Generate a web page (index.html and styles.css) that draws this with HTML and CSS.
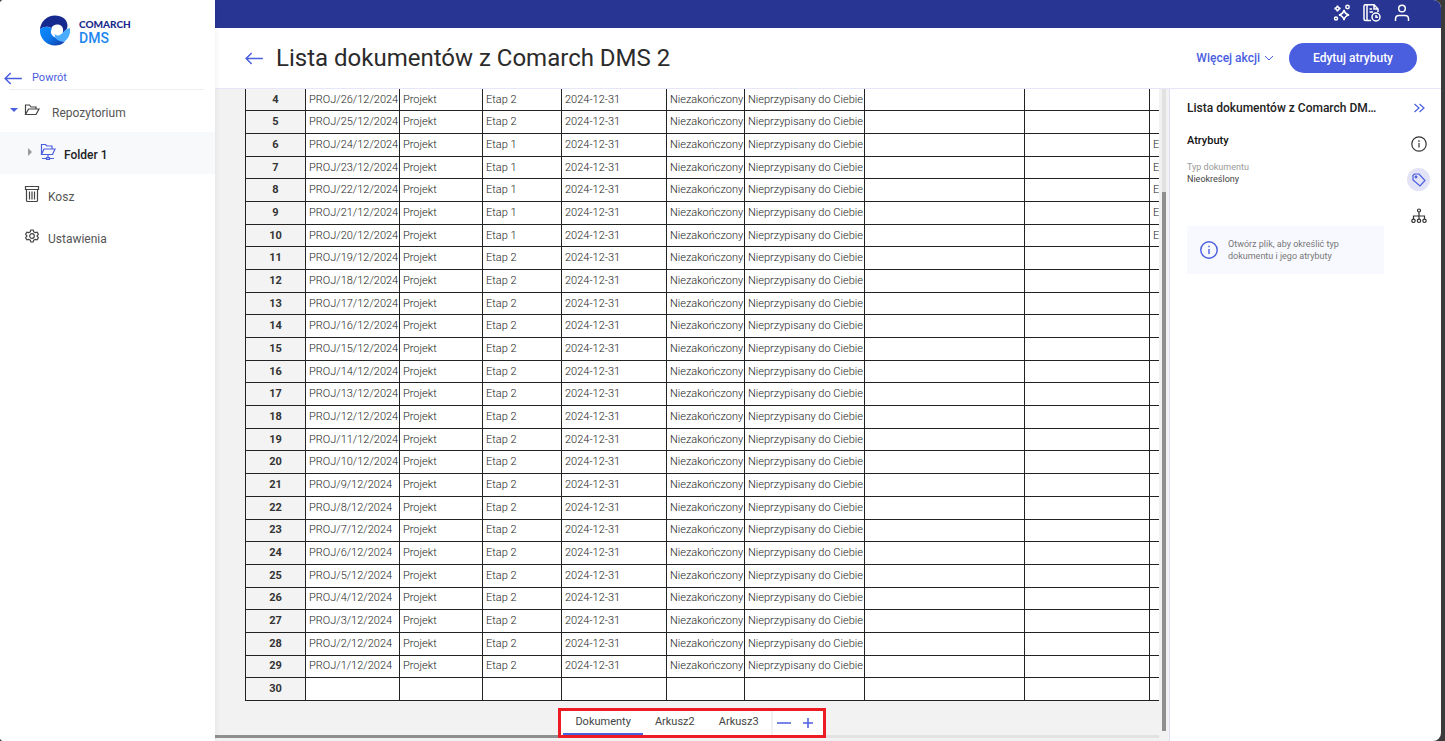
FILE: index.html
```html
<!DOCTYPE html>
<html lang="pl">
<head>
<meta charset="utf-8">
<title>Comarch DMS</title>
<link rel="stylesheet" href="styles.css">
</head>
<body>
<div class="app">
  <nav class="sidebar" aria-label="Nawigacja">
    <div class="brand">
      <svg class="brand-mark" viewBox="0 0 90 90" aria-hidden="true">
        <defs>
          <linearGradient id="wave" x1="0" y1="0" x2="1" y2="1">
            <stop offset="0" stop-color="#0a8cff"/><stop offset=".5" stop-color="#0a78ea"/><stop offset="1" stop-color="#1433a0"/>
          </linearGradient>
        </defs>
        <path fill="#15298f" d="M0 42A45 45 0 0 1 45 0C66 0 80 12 82 26C84 38 78 46 68 52C72 42 68 31 58 28C48 25 38 29 34 38C22 30 8 34 0 42Z"/>
        <path fill="url(#wave)" d="M0 42C10 31 26 31 36 40C28 50 34 60 46 66C56 74 66 79 75 78C66 87 56 90 45 90A45 45 0 0 1 0 42Z"/>
        <path fill="#4aacff" d="M90 38A45 45 0 0 1 74 78C58 79 44 72 44 56C56 64 62 58 68 52C74 44 82 38 90 38Z"/>
      </svg>
      <div class="brand-text"><span class="brand-name">COMARCH</span><span class="brand-product">DMS</span></div>
    </div>
    <a class="back" href="#">
      <svg class="back-arrow" viewBox="0 0 20 14" aria-hidden="true"><path d="M7 1 1 7l6 6M1 7h18"/></svg>
      Powrót
    </a>
    <ul class="tree">
      <li><a class="node" href="#">
        <svg class="caret" viewBox="0 0 8 8" aria-hidden="true"><path fill="#4a5ee0" d="M0 2h8L4 6z"/></svg>
        <svg class="icon" viewBox="0 0 16 16" aria-hidden="true"><path d="M1.500 12.500V3h4l1.500 2h5v2M1.500 12.500l3-5.500h10.500l-3 5.500z"/></svg>
        <span class="label label-wide">Repozytorium</span></a></li>
      <li><a class="node node-child" href="#" aria-current="page">
        <svg class="caret" viewBox="0 0 8 8" aria-hidden="true"><path fill="#999" d="M2 0v8l4-4z"/></svg>
        <svg class="icon icon-accent" viewBox="0 0 16 18" aria-hidden="true"><path d="M1.500 11.500V1.500h4L7 3h5v3M1.500 11.500 4 6h11l-2.500 5.500zM8 11.500v4M2 15.500h4.500M9.500 15.500H14M6.500 14.500h3v2h-3z"/></svg>
        <span class="label">Folder 1</span></a></li>
      <li><a class="node" href="#">
        <svg class="icon icon-first" viewBox="0 0 16 18" aria-hidden="true"><path d="M1.500 1.500h13v3h-13zM2.500 4.500v11q0 1 1 1h9q1 0 1-1v-11M5.500 6.500v8M8 6.500v8M10.500 6.500v8"/></svg>
        <span class="label">Kosz</span></a></li>
      <li><a class="node" href="#">
        <svg class="icon icon-first" viewBox="0 0 16 16" aria-hidden="true"><circle cx="8" cy="8" r="2.300"/><path d="M6.800 2h2.400l.5 1.800 1.600.9 1.800-.5 1.300 2.100L13 8l1.400 1.700-1.300 2.100-1.800-.5-1.600.9-.5 1.800H6.800l-.5-1.800-1.600-.9-1.800.5-1.300-2.100L3 8 1.600 6.300l1.300-2.100 1.800.5 1.600-.9z"/></svg>
        <span class="label">Ustawienia</span></a></li>
    </ul>
  </nav>
  <div class="page">
    <div class="topbar">
      <button class="icon-btn" type="button" aria-label="Asystent">
        <svg class="top-icon" viewBox="0 0 18 18" aria-hidden="true"><path d="M11 6q.8 4 5 5-4.200 1-5 5-.8-4-5-5 4.200-1 5-5zM4.500 1.500q.4 2.500 3 3-2.600.5-3 3-.4-2.500-3-3 2.600-.5 3-3z"/><circle cx="14.500" cy="3" r="1.700"/><circle cx="3" cy="14.500" r="1.500"/></svg>
      </button>
      <button class="icon-btn" type="button" aria-label="Dokumenty">
        <svg class="top-icon" viewBox="0 0 18 18" aria-hidden="true"><path d="M8 16.500H2.500q-1.500 0-1.500-1.500V2Q1 .7 2.500.7H11L15 5v3M4 .7v15.800M11 .7V5h4M6.500 5H9M6.500 8H10"/><circle cx="13" cy="13" r="4"/><path d="M13 11v2.300h2"/></svg>
      </button>
      <button class="icon-btn" type="button" aria-label="Konto">
        <svg class="top-icon" viewBox="0 0 18 18" aria-hidden="true"><circle cx="9" cy="4.500" r="3.300"/><path d="M2.500 17v-2q0-3.500 3.500-3.500h6q3.500 0 3.500 3.500v2"/></svg>
      </button>
    </div>
    <header class="header">
      <a class="header-back" href="#" aria-label="Wstecz"><svg class="back-arrow" viewBox="0 0 20 14" aria-hidden="true"><path d="M7 1 1 7l6 6M1 7h18"/></svg></a>
      <h1 class="title">Lista dokumentów z Comarch DMS 2</h1>
      <button class="more" type="button">Więcej akcji <svg class="chevron" viewBox="0 0 10 6" aria-hidden="true"><path d="m1 1 4 4 4-4"/></svg></button>
      <button class="primary" type="button">Edytuj atrybuty</button>
    </header>
    <div class="body">
      <main class="viewer">
        <div class="sheet">
          <table class="grid">
            <colgroup><col class="c-num"><col class="c-id"><col class="c-type"><col class="c-stage"><col class="c-date"><col class="c-state"><col class="c-owner"><col class="c-blank"><col class="c-blank2"><col class="c-last"></colgroup>
            <tbody id="rows"></tbody>
          </table>
        </div>
        <div class="vscroll"><div class="vthumb"></div></div>
        <div class="hscroll"><div class="hthumb"></div></div>
        <div class="footer">
          <div class="tabs">
            <button class="tab tab-active" type="button">Dokumenty</button>
            <button class="tab" type="button">Arkusz2</button>
            <button class="tab" type="button">Arkusz3</button>
            <div class="zoom">
              <button class="zoom-btn" type="button" aria-label="Pomniejsz"><svg class="zoom-icon" viewBox="0 0 14 14" aria-hidden="true"><path d="M0 7h14"/></svg></button>
              <button class="zoom-btn" type="button" aria-label="Powiększ"><svg class="zoom-icon" viewBox="0 0 14 14" aria-hidden="true"><path d="M2 7h10M7 2v10"/></svg></button>
            </div>
          </div>
        </div>
      </main>
      <aside class="details">
        <div class="info">
          <h2 class="info-title">Lista dokumentów z Comarch DMS 2</h2>
          <h3 class="info-section">Atrybuty</h3>
          <dl class="attr"><dt>Typ dokumentu</dt><dd>Nieokreślony</dd></dl>
          <div class="notice">
            <svg class="notice-icon" viewBox="0 0 18 18" aria-hidden="true"><circle cx="9" cy="9" r="8.200"/><path d="M9 8v5M9 4.700v1.500"/></svg>
            <p class="notice-text">Otwórz plik, aby określić typ dokumentu i jego atrybuty</p>
          </div>
        </div>
        <div class="rail">
          <button class="rail-btn rail-collapse" type="button" aria-label="Zwiń"><svg class="rail-icon" viewBox="0 0 16 16" aria-hidden="true"><path d="m3.500 4 4.500 4-4.500 4M8.500 4 13 8l-4.500 4"/></svg></button>
          <button class="rail-btn" type="button" aria-label="Informacje"><svg class="rail-icon" viewBox="0 0 16 16" aria-hidden="true"><circle cx="8" cy="8" r="7.200"/><path d="M8 7v4.500M8 4.300V6"/></svg></button>
          <button class="rail-btn rail-active" type="button" aria-label="Atrybuty"><svg class="rail-icon" viewBox="0 0 16 16" aria-hidden="true"><path d="M2 3.500 3.500 2H8l6 6.500L9 14 2 8z"/><circle cx="5" cy="5" r=".8"/></svg></button>
          <button class="rail-btn" type="button" aria-label="Struktura"><svg class="rail-icon" viewBox="0 0 16 16" aria-hidden="true"><circle cx="8" cy="2.500" r="1.500"/><path d="M8 4v7M2.500 11V8h11v3"/><circle cx="2.500" cy="12.800" r="1.700"/><circle cx="8" cy="12.800" r="1.700"/><circle cx="13.500" cy="12.800" r="1.700"/></svg></button>
        </div>
      </aside>
    </div>
  </div>
</div>
<script src="sheet.js"></script>
</body>
</html>
```
FILE: styles.css
```css
* { box-sizing: border-box; }
html, body { height: 100%; }
body {
  margin: 0;
  background: #3b3b3b;
  color: #333;
  font: 12px/16px Roboto, "Liberation Sans", sans-serif;
}
button { padding: 0; border: 0; background: none; font: inherit; color: inherit; }
a { color: inherit; text-decoration: none; }
svg { flex: none; fill: none; stroke: currentColor; }

.app {
  display: flex;
  height: 100vh;
  margin-right: 4px;
  border-radius: 4px 8px 8px 4px;
  background: #fff;
  overflow: hidden;
}

.sidebar {
  position: relative;
  z-index: 1;
  flex: none;
  width: 215px;
  background: #fff;
  box-shadow: 0 0 6px rgba(0, 0, 0, .08);
}
.brand { display: flex; align-items: center; gap: 9px; padding: 15px 0 0 40px; }
.brand-mark { width: 30px; height: 31px; stroke: none; }
.brand-text { display: flex; flex-direction: column; }
.brand-name { color: #1a2a8c; font: 900 10px/14px Lato, sans-serif; }
.brand-product { color: #1e86f0; font-weight: 500; font-size: 14px; line-height: 14px; }
.back {
  display: flex;
  align-items: center;
  gap: 9px;
  margin: 21px 11px 0 0;
  padding-left: 4px;
  height: 22px;
  color: #4a5ee0;
  font-size: 11px;
}
.back-arrow { width: 19px; height: 13px; stroke: #4a5ee0; stroke-width: 1.600; }
.tree {
  margin: 0 11px 0 9px;
  padding: 0;
  border-top: 1px solid #eee;
  list-style: none;
}
.node {
  display: flex;
  align-items: center;
  height: 42px;
  margin: 0 -11px 0 -9px;
  padding-left: 10px;
  color: #555;
}
.node-child { padding-left: 26px; background: #f8f9fb; color: #222; font-weight: 500; }
.caret { width: 8px; height: 8px; margin-right: 6px; margin-bottom: 2px; stroke: none; }
.icon { width: 16px; height: 18px; margin-right: 8px; margin-bottom: 2px; color: #444; stroke-width: 1.200; }
.icon-accent { color: #4a5ee0; }
.icon-first { margin-left: 14px; }
.label { padding-top: 4px; }
.label-wide { margin-left: 4px; }

.page { display: flex; flex: 1; flex-direction: column; min-width: 0; }
.topbar {
  display: flex;
  flex: none;
  align-items: center;
  justify-content: flex-end;
  gap: 12px;
  height: 28px;
  padding: 0 30px 2px;
  background: #283593;
}
.icon-btn { display: flex; color: #fff; }
.top-icon { width: 18px; height: 18px; stroke-width: 1.500; }
.header {
  display: flex;
  flex: none;
  align-items: center;
  height: 61px;
  padding: 0 24px 0 30px;
  border-bottom: 1px solid #e6e6f8;
}
.header-back { display: flex; margin-right: 12px; }
.title { flex: 1; margin: 0; color: #2b2b2b; font-size: 24px; font-weight: 400; line-height: 32px; }
.more { display: flex; align-items: center; gap: 4px; margin-right: 15px; color: #4a5ee0; font-weight: 500; }
.chevron { width: 10px; height: 6px; }
.primary { height: 30px; padding: 0 24px; border-radius: 15px; background: #4a5ee0; color: #fff; font-weight: 500; }

.body { display: flex; flex: 1; min-height: 0; }
.viewer {
  display: grid;
  flex: 1;
  grid-template-columns: minmax(0, 1fr) 10px;
  grid-template-rows: minmax(0, 1fr) 40px;
  min-width: 0;
  background: #f2f2f2;
}
.sheet { padding-left: 30px; overflow: hidden; }
.grid {
  width: 1100px;
  height: 100%;
  border-collapse: collapse;
  table-layout: fixed;
  background: #fff;
  color: #222;
  font-size: 11px;
  font-weight: 300;
  line-height: 14px;
}
.grid th, .grid td { padding: 0 3px; border: 1px solid #222; text-align: left; white-space: nowrap; }
.grid tr:first-child > * { border-top: 0; }
.grid th { background: #f3f3f3; color: #333; font-weight: 700; text-align: center; }
.c-num { width: 60px; }
.c-id { width: 94px; }
.c-type { width: 83px; }
.c-stage { width: 79px; }
.c-date { width: 105px; }
.c-state { width: 78px; }
.c-owner { width: 120px; }
.c-blank { width: 160px; }
.c-blank2 { width: 125px; }

.vscroll { grid-area: 1 / 2 / 3 / 3; width: 4px; margin: 0 0 10px 3px; padding-top: 103px; background: #e2e2e2; }
.vthumb { height: 100%; background: #8f8f8f; }
.hscroll { grid-area: 2 / 1; align-self: end; height: 3px; margin-bottom: 3px; background: #e2e2e2; }
.hthumb { width: 383px; height: 3px; background: #8f8f8f; }
.footer { grid-area: 2 / 1 / 3 / 3; display: flex; justify-content: center; padding: 7px 0 3px; }
.tabs { display: flex; padding-left: 2px; border: 3px solid #ed1c24; background: #fff; color: #444; font-size: 11px; }
.tab { padding: 0 12px; border-bottom: 2px solid transparent; }
.tab-active { border-color: #4a5ee0; }
.zoom { display: flex; gap: 10px; padding: 0 8px 0 4px; border-left: 2px solid #f2f2f2; color: #4a5ee0; }
.zoom-btn { display: flex; align-items: center; }
.zoom-icon { width: 14px; height: 14px; stroke-width: 1.500; }

.details {
  display: flex;
  flex: none;
  justify-content: space-between;
  width: 272px;
  padding: 7px 11px 0 17px;
  border-left: 1px solid #e0e0f5;
}
.info { width: 197px; padding-top: 3px; }
.info-title {
  margin: 0;
  padding-right: 4px;
  overflow: hidden;
  color: #222;
  font-size: 12px;
  font-weight: 500;
  line-height: 18px;
  text-overflow: ellipsis;
  white-space: nowrap;
}
.info-section { margin: 16px 0 12px; color: #111; font-size: 11px; font-weight: 500; line-height: 16px; }
.attr { margin: 0; font-size: 9px; line-height: 12px; }
.attr dt { color: #999; }
.attr dd { margin: 0; color: #444; }
.notice {
  display: flex;
  align-items: center;
  gap: 10px;
  margin-top: 41px;
  padding: 12px 13px;
  background: #f8f9fe;
}
.notice-icon { width: 18px; height: 18px; color: #4a5ee0; stroke-width: 1.400; }
.notice-text { margin: 0; color: #777; font-size: 9px; line-height: 12px; }
.rail { display: flex; flex-direction: column; gap: 13px; }
.rail-btn { display: flex; align-items: center; justify-content: center; width: 23px; height: 23px; border-radius: 50%; color: #333; }
.rail-collapse { color: #4a5ee0; }
.rail-active { background: #e3e3f8; color: #4a5ee0; }
.rail-icon { width: 16px; height: 16px; stroke-width: 1.200; }
```
FILE: sheet.js
```js
const body = document.getElementById('rows');
for (let n = 4; n <= 30; n++) {
  const row = body.insertRow();
  const head = document.createElement('th');
  head.scope = 'row';
  head.textContent = n;
  row.append(head);
  const stageOne = n >= 6 && n <= 10;
  const cells = n === 30
    ? ['', '', '', '', '', '']
    : [`PROJ/${30 - n}/12/2024`, 'Projekt', stageOne ? 'Etap 1' : 'Etap 2', '2024-12-31', 'Niezakończony', 'Nieprzypisany do Ciebie'];
  cells.push('', '', stageOne ? 'Etap 1' : '');
  for (const text of cells) row.insertCell().textContent = text;
}
```
